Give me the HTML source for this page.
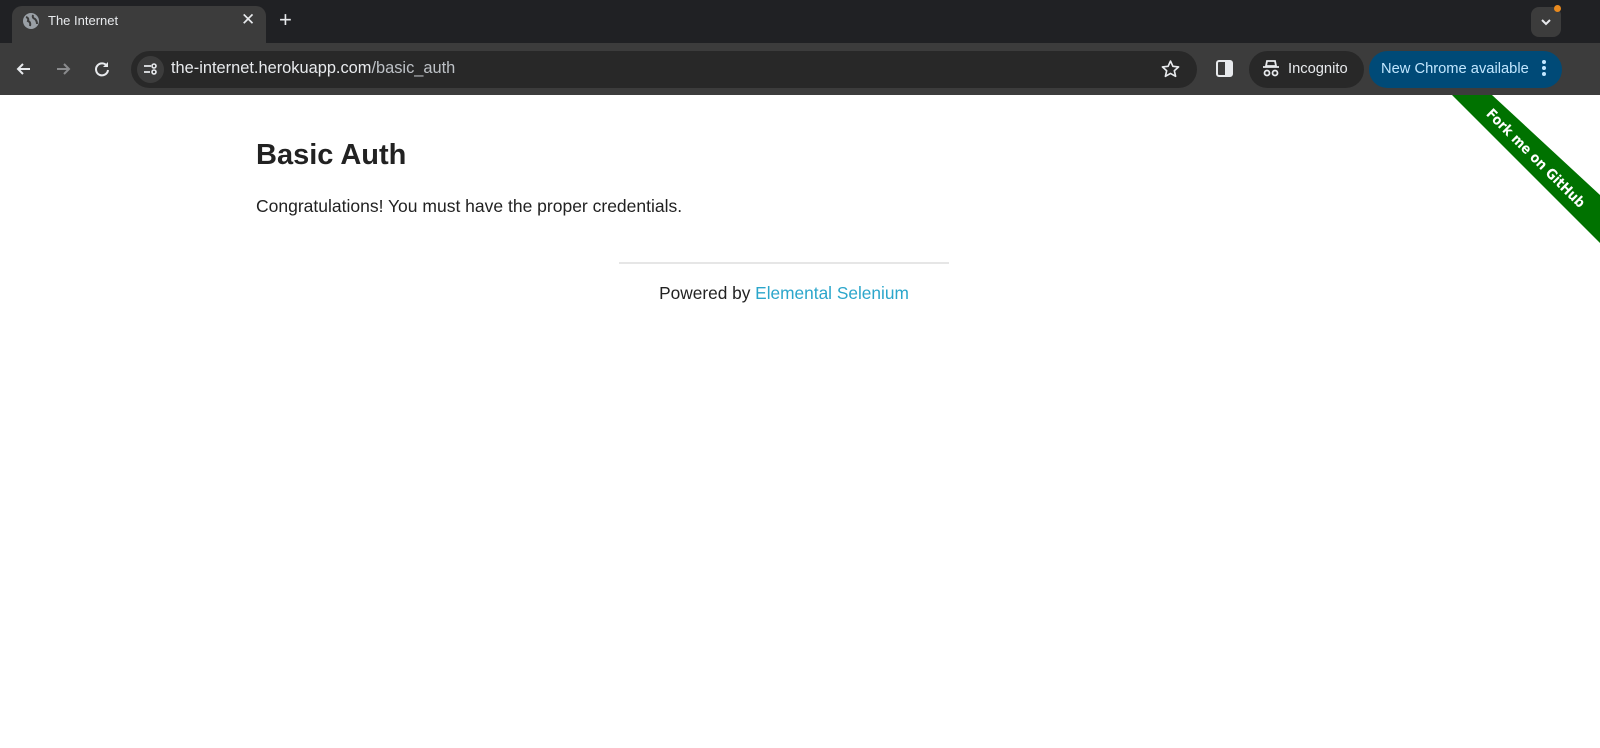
<!DOCTYPE html>
<html><head><meta charset="utf-8"><style>
*{margin:0;padding:0;box-sizing:border-box}
body{width:1600px;height:748px;overflow:hidden;background:#fff;font-family:"Liberation Sans",sans-serif;position:relative}
.top{position:absolute;left:0;top:0;width:1600px;height:44px;background:#202124}
.tab{position:absolute;left:12px;top:6px;width:254px;height:40px;background:#3c3c3c;border-radius:10px 10px 0 0}
.tb{position:absolute;left:0;top:43px;width:1600px;height:52px;background:#3c3c3c}
.abs{position:absolute}
.w{color:#e8eaed}
.addr{position:absolute;left:131px;top:51px;width:1066px;height:37px;background:#282828;border-radius:19px}
</style></head><body>
<div class="top"></div>
<div class="tab"></div>
<div class="tb"></div>
<svg class="abs" style="left:22px;top:12px" width="18" height="18" viewBox="0 0 18 18"><circle cx="9" cy="9" r="8" fill="#9aa0a6"/><path d="M4 5 Q7 6 6 9 Q9 10 8 14 M11 3 Q10 6 13 7 Q15 9 15 12" stroke="#3c3c3c" stroke-width="2" fill="none"/></svg>
<div class="abs w" style="left:48px;top:13px;font-size:13px">The Internet</div>
<div class="abs w" style="left:241px;top:10px;font-size:17px">✕</div>
<div class="abs w" style="left:279px;top:7px;font-size:22px">+</div>
<div class="abs" style="left:1531px;top:7px;width:30px;height:30px;background:#3c3c3c;border-radius:8px"></div>
<svg class="abs" style="left:1540px;top:17px" width="12" height="10"><path d="M2 3 L6 7 L10 3" stroke="#e8eaed" stroke-width="2" fill="none"/></svg>
<div class="abs" style="left:1554px;top:5px;width:7px;height:7px;background:#e8891e;border-radius:50%"></div>
<svg class="abs" style="left:14px;top:59px" width="20" height="20" viewBox="0 0 20 20"><path d="M16 10H4M9 5L4 10L9 15" stroke="#e8eaed" stroke-width="2" fill="none"/></svg>
<svg class="abs" style="left:53px;top:59px" width="20" height="20" viewBox="0 0 20 20"><path d="M4 10H16M11 5L16 10L11 15" stroke="#8a8b8d" stroke-width="2" fill="none"/></svg>
<svg class="abs" style="left:92px;top:59px" width="20" height="20" viewBox="0 0 20 20"><path d="M15 7A6 6 0 1 0 16 11" stroke="#e8eaed" stroke-width="2" fill="none"/><path d="M16 3V8H11Z" fill="#e8eaed"/></svg>
<div class="addr"></div>
<div class="abs" style="left:137px;top:56px;width:27px;height:27px;background:#3c3c3c;border-radius:50%"></div>
<svg class="abs" style="left:142px;top:61px" width="17" height="17" viewBox="0 0 17 17"><path d="M2 5H9M2 11H8" stroke="#e8eaed" stroke-width="1.8"/><circle cx="12" cy="5" r="2" stroke="#e8eaed" fill="none" stroke-width="1.6"/><circle cx="12" cy="11" r="2" stroke="#e8eaed" fill="none" stroke-width="1.6"/></svg>
<div class="abs" style="left:171px;top:59px;font-size:16.4px;color:#e8eaed">the-internet.herokuapp.com<span style="color:#bdc1c6">/basic_auth</span></div>
<svg class="abs" style="left:1160px;top:59px" width="21" height="20" viewBox="0 0 24 24"><path d="M12 2.5l2.9 6.3 6.8.7-5.1 4.6 1.5 6.7L12 17.3l-6.1 3.5 1.5-6.7-5.1-4.6 6.8-.7z" stroke="#e8eaed" stroke-width="2" fill="none" stroke-linejoin="round"/></svg>
<svg class="abs" style="left:1216px;top:60px" width="17" height="17"><rect x="1" y="1" width="15" height="15" rx="2" stroke="#e8eaed" stroke-width="2" fill="none"/><rect x="9" y="1" width="7" height="15" fill="#e8eaed"/></svg>
<div class="abs" style="left:1249px;top:51px;width:115px;height:37px;background:#282828;border-radius:19px"></div>
<svg class="abs" style="left:1262px;top:59px" width="18" height="20" viewBox="0 0 18 20"><path d="M5 2H13L14 7H4Z M1 8H17" stroke="#e8eaed" stroke-width="1.8" fill="none"/><circle cx="5" cy="14" r="2.5" stroke="#e8eaed" stroke-width="1.8" fill="none"/><circle cx="13" cy="14" r="2.5" stroke="#e8eaed" stroke-width="1.8" fill="none"/></svg>
<div class="abs w" style="left:1288px;top:61px;font-size:14.7px">Incognito</div>
<div class="abs" style="left:1369px;top:51px;width:193px;height:37px;background:#004a77;border-radius:19px"></div>
<div class="abs" style="left:1381px;top:61px;font-size:14.7px;color:#c2e7ff">New Chrome available</div>
<div class="abs" style="left:1542px;top:60px;width:4px;height:4px;background:#c2e7ff;border-radius:50%;box-shadow:0 6px 0 #c2e7ff,0 12px 0 #c2e7ff"></div>
<svg class="abs" style="left:1400px;top:95px" width="200" height="160">
<g transform="translate(-1400 -95)">
<polygon points="1452,95 1492,95 1600,195 1600,243" fill="#007200"/>
<text x="1536" y="163" transform="rotate(45 1536 158)" text-anchor="middle" fill="#fff" font-size="14" font-weight="bold" font-family="DejaVu Sans Condensed, DejaVu Sans, sans-serif">Fork me on GitHub</text>
</g>
</svg>
<div class="abs" style="left:256px;top:139px;font-size:29px;font-weight:bold;color:#222">Basic Auth</div>
<div class="abs" style="left:256px;top:196px;font-size:17.5px;color:#222">Congratulations! You must have the proper credentials.</div>
<div class="abs" style="left:619px;top:262px;width:330px;height:2px;background:#e6e6e6"></div>
<div class="abs" style="left:569px;top:283px;width:430px;text-align:center;font-size:17.3px;color:#222">Powered by <span style="color:#2ba6cb">Elemental Selenium</span></div>
</body></html>
